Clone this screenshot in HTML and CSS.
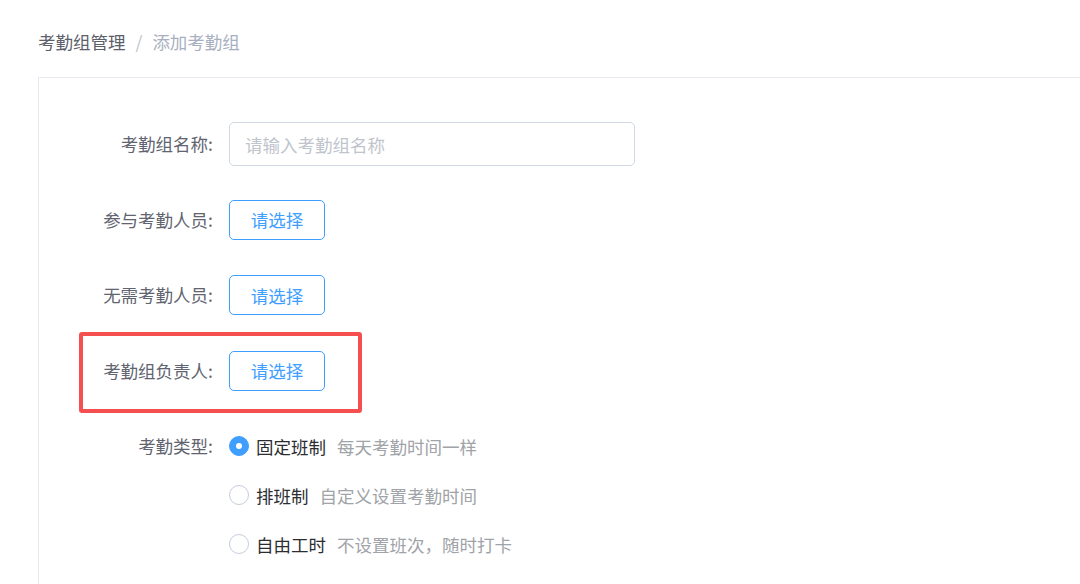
FILE: index.html
```html
<!DOCTYPE html>
<html lang="zh-CN">
<head>
<meta charset="utf-8">
<title>添加考勤组</title>
<link rel="stylesheet" href="styles.css">
</head>
<body>
<div class="page">
  <div class="crumb">
    <span class="crumb-item">考勤组管理</span><span class="crumb-sep">/</span><span class="crumb-current">添加考勤组</span>
  </div>
  <div class="card">
    <div class="form">
      <div class="row">
        <label class="label">考勤组名称:</label>
        <input class="input" type="text" placeholder="请输入考勤组名称">
      </div>
      <div class="row">
        <label class="label">参与考勤人员:</label>
        <button class="btn">请选择</button>
      </div>
      <div class="row">
        <label class="label">无需考勤人员:</label>
        <button class="btn">请选择</button>
      </div>
      <div class="row">
        <label class="label">考勤组负责人:</label>
        <button class="btn">请选择</button>
      </div>
      <div class="row row-top">
        <label class="label">考勤类型:</label>
        <div class="radios">
          <div class="radio checked"><span class="dot"></span><span class="rtext">固定班制</span><span class="rdesc">每天考勤时间一样</span></div>
          <div class="radio"><span class="dot"></span><span class="rtext">排班制</span><span class="rdesc">自定义设置考勤时间</span></div>
          <div class="radio"><span class="dot"></span><span class="rtext">自由工时</span><span class="rdesc">不设置班次，随时打卡</span></div>
        </div>
      </div>
    </div>
    <div class="highlight"></div>
  </div>
</div>
</body>
</html>
```

FILE: styles.css
```css
html, body {
  margin: 0;
  padding: 0;
  background: #ffffff;
  overflow: hidden;
}
body {
  font-family: "Noto Sans CJK SC", "Noto Sans", sans-serif;
  font-size: 17.5px;
  color: #606266;
}
.page {
  padding-left: 38px;
  height: 584px;
  box-sizing: border-box;
  display: flex;
  flex-direction: column;
}
.crumb {
  padding-top: 30px;
  height: 24px;
  line-height: 24px;
  margin-bottom: 23px;
  white-space: nowrap;
  flex: none;
}
.crumb-item {
  color: #5b606b;
}
.crumb-sep {
  color: #c0c4cc;
  margin: 0 10px;
}
.crumb-current {
  color: #a7b0c0;
}
.card {
  position: relative;
  flex: 1;
  min-height: 0;
  overflow: hidden;
  border-top: 1px solid #e6eaf0;
  border-left: 1px solid #e6eaf0;
  box-sizing: border-box;
  padding-top: 46px;
}
.form {
  display: flex;
  flex-direction: column;
  gap: 35.5px;
}
.row {
  display: flex;
  align-items: center;
  height: 40px;
}
.row-top {
  align-items: flex-start;
  height: auto;
}
.label {
  width: 174px;
  margin-right: 16px;
  text-align: right;
  line-height: 40px;
  color: #5f6470;
  white-space: nowrap;
}
.input {
  width: 406px;
  height: 44px;
  box-sizing: border-box;
  border: 1px solid #d2d9e4;
  border-radius: 5px;
  padding: 0 15px;
  font-family: inherit;
  font-size: 17.5px;
  color: #606266;
  outline: none;
  flex: none;
}
.input::placeholder {
  color: #c0c4cc;
}
.btn {
  width: 96px;
  height: 40px;
  box-sizing: border-box;
  border: 1px solid #409eff;
  border-radius: 5px;
  background: #ffffff;
  color: #409eff;
  font-family: inherit;
  font-size: 17.5px;
  padding: 0;
  flex: none;
}
.radios {
  display: flex;
  flex-direction: column;
  gap: 9px;
}
.radio {
  display: flex;
  align-items: center;
  height: 40px;
  white-space: nowrap;
}
.dot {
  width: 20px;
  height: 20px;
  box-sizing: border-box;
  border: 1.5px solid #c4cedb;
  border-radius: 50%;
  margin-right: 7px;
  flex: none;
  position: relative;
}
.radio.checked .dot {
  border-color: #409eff;
  background: #409eff;
}
.radio.checked .dot::after {
  content: "";
  position: absolute;
  left: 50%;
  top: 50%;
  width: 6px;
  height: 6px;
  margin: -3px 0 0 -3px;
  border-radius: 50%;
  background: #ffffff;
}
.rtext {
  color: #2b2d31;
}
.rdesc {
  color: #a0a3a8;
  margin-left: 11px;
}
.highlight {
  position: absolute;
  left: 40px;
  top: 254px;
  width: 283px;
  height: 81px;
  box-sizing: border-box;
  border: 4px solid #f5504f;
  border-radius: 3px;
  pointer-events: none;
}
```
